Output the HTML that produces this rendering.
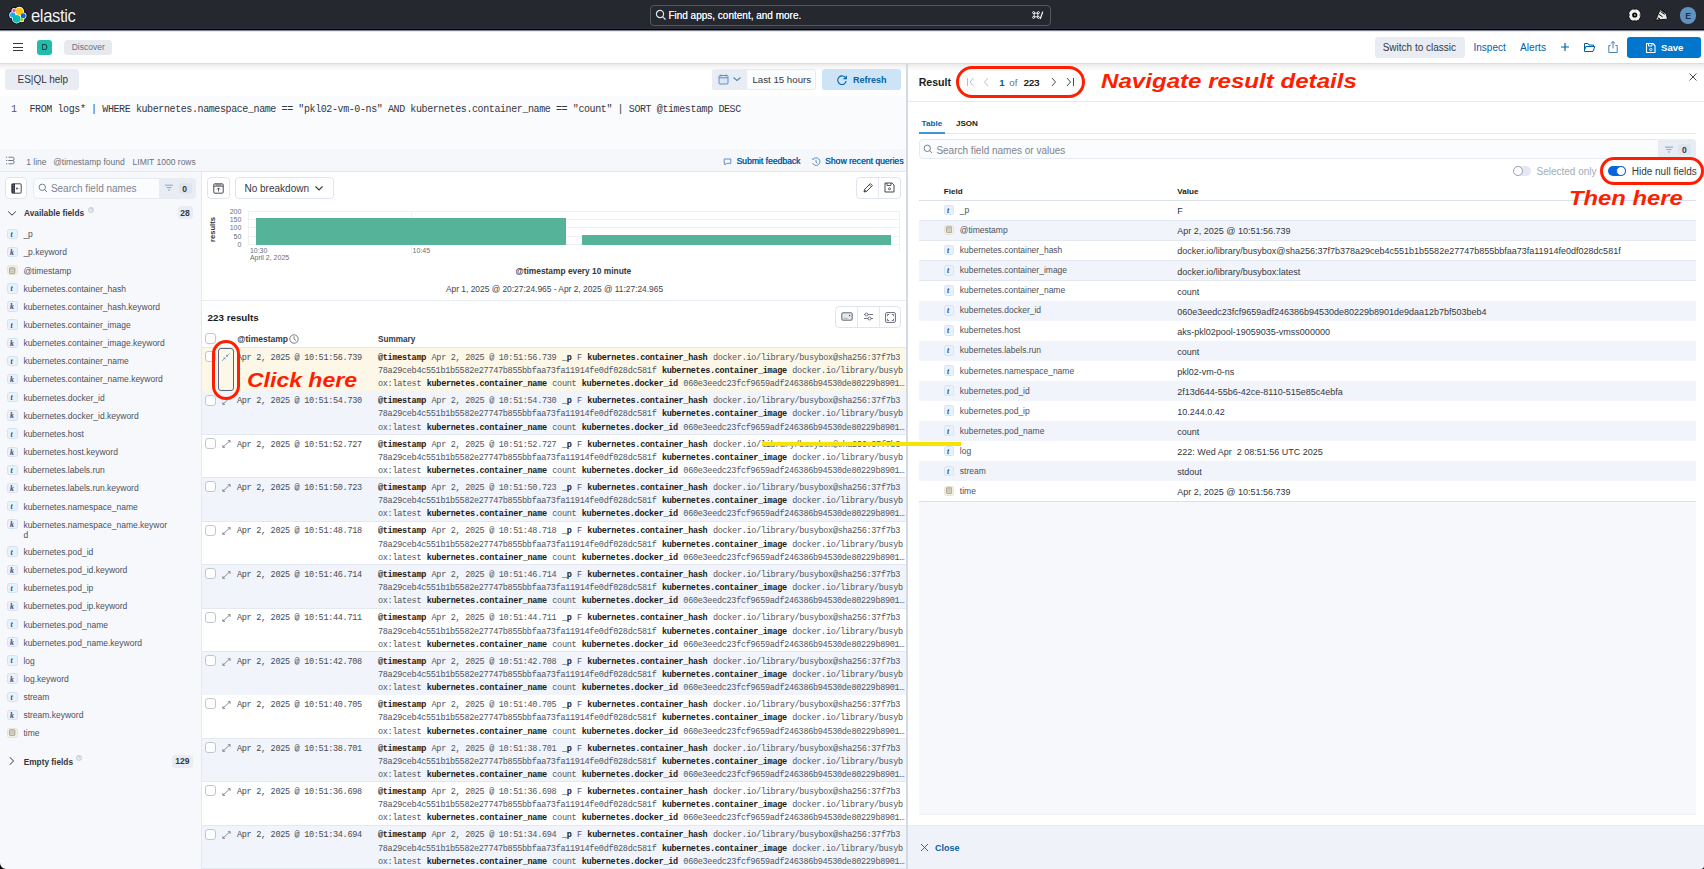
<!DOCTYPE html>
<html><head><meta charset="utf-8"><title>Discover - Elastic</title><style>
html,body{margin:0;padding:0;width:1704px;height:869px;overflow:hidden;background:#fff}
body{position:relative;font-family:"Liberation Sans",sans-serif;}
.t{position:absolute;white-space:pre;}
.r{position:absolute;}
b{font-weight:700}
i{font-style:normal;letter-spacing:0.4px}
</style></head><body>
<div class="r" style="left:0.00px;top:0.00px;width:1704.00px;height:29.00px;background:#25282f"></div>
<div class="r" style="left:0.00px;top:28.00px;width:1704.00px;height:1.00px;background:#2e3139"></div>
<div class="r" style="left:0.00px;top:29.00px;width:1704.00px;height:1.00px;background:#000"></div>
<svg class="r" style="left:7.00px;top:4.00px;" width="24" height="22" viewBox="0 0 24 22"><circle cx="12.4" cy="7.3" r="5.4" fill="#0a0a0a"/><circle cx="7" cy="6.5" r="3.3" fill="#0a0a0a"/><circle cx="5.7" cy="10.9" r="4.300000000000001" fill="#0a0a0a"/><circle cx="16.2" cy="11.8" r="4.1" fill="#0a0a0a"/><circle cx="9.6" cy="14.8" r="5.5" fill="#0a0a0a"/><circle cx="14.8" cy="15.8" r="3.3" fill="#0a0a0a"/><circle cx="12.4" cy="7.3" r="4.6" fill="#fff"/><circle cx="7" cy="6.5" r="2.5" fill="#fff"/><circle cx="5.7" cy="10.9" r="3.5" fill="#fff"/><circle cx="16.2" cy="11.8" r="3.3" fill="#fff"/><circle cx="9.6" cy="14.8" r="4.7" fill="#fff"/><circle cx="14.8" cy="15.8" r="2.5" fill="#fff"/><circle cx="12.4" cy="7.3" r="3.8" fill="#fec514"/><circle cx="7" cy="6.5" r="1.7" fill="#f04e98"/><circle cx="5.7" cy="10.9" r="2.7" fill="#1ba9f5"/><circle cx="16.2" cy="11.8" r="2.5" fill="#0b64dd"/><circle cx="9.6" cy="14.8" r="3.9" fill="#00bfb3"/><circle cx="14.8" cy="15.8" r="1.7" fill="#93c90e"/></svg>
<div class="t" style="left:30.60px;top:5.00px;font-size:17.5px;line-height:23px;color:#f4f5f7;letter-spacing:-0.4px;transform:scaleX(0.95);transform-origin:0 0;text-shadow:0 0 1px #000;">elastic</div>
<div class="r" style="left:650.30px;top:4.50px;width:400.40px;height:21.30px;border:1.5px solid #535862;border-radius:4px;background:#25282f;box-sizing:border-box"></div>
<svg class="r" style="left:655.00px;top:9.00px;" width="12" height="12" viewBox="0 0 12 12"><circle cx="5" cy="5" r="3.6" fill="none" stroke="#dfe5ef" stroke-width="1.2"/><path d="M7.6 7.6 L10.5 10.5" stroke="#dfe5ef" stroke-width="1.3"/></svg>
<div class="t" style="left:668.40px;top:9.00px;font-size:10.0px;line-height:13px;color:#eef1f6;text-shadow:0 0 0.3px #fff;">Find apps, content, and more.</div>
<svg class="r" style="left:1032.00px;top:10.50px;" width="12" height="9" viewBox="0 0 12 9"><g fill="none" stroke="#fff" stroke-width="0.9"><path d="M2.2 2.2h3.6v3.6H2.2z"/><circle cx="1.6" cy="1.6" r="1"/><circle cx="6.4" cy="1.6" r="1"/><circle cx="1.6" cy="6.4" r="1"/><circle cx="6.4" cy="6.4" r="1"/></g><path d="M8.2 8L10.8 0.6" stroke="#fff" stroke-width="1.2"/></svg>
<svg class="r" style="left:1627.00px;top:7.00px;" width="16" height="16" viewBox="0 0 16 16"><circle cx="7.7" cy="8" r="6.6" fill="#0a0a0a"/><circle cx="7.7" cy="8" r="5.9" fill="#f2f2f2"/><circle cx="7.7" cy="8" r="2.6" fill="#0a0a0a"/><circle cx="7.9" cy="8.1" r="0.8" fill="#ddd"/><path d="M6.5 2.6h2.4M6.5 13.4h2.4M2.3 6.8v2.4M13.1 6.8v2.4" stroke="#333" stroke-width="0.8"/></svg>
<svg class="r" style="left:1653.00px;top:7.00px;" width="16" height="16" viewBox="0 0 16 16"><path d="M2.6 13L7.2 2.6L13.2 6.8L14.6 12.2Z" fill="#e8e8e8" stroke="#0a0a0a" stroke-width="0.9" stroke-linejoin="round"/><path d="M4.6 10.6l2.2 1.4M6 7.4l3.6 2.4M7.6 4.6l4.2 2.8" stroke="#0a0a0a" stroke-width="1"/><circle cx="6.2" cy="11.6" r="0.7" fill="#0a0a0a"/><circle cx="10.8" cy="4.4" r="0.8" fill="#0a0a0a"/></svg>
<div class="r" style="left:1679.60px;top:7.00px;width:16.80px;height:16.80px;background:#6092c0;border-radius:50%"></div>
<div class="t" style="left:1685.20px;top:11.00px;font-size:8.5px;line-height:11px;color:#1d2a3e;text-shadow:0.3px 0 0 #1d2a3e;">E</div>
<div class="r" style="left:0.00px;top:30.00px;width:1704.00px;height:33.00px;background:#fff"></div>
<div class="r" style="left:0.00px;top:30.00px;width:1704.00px;height:1.00px;background:#7d828c"></div>
<div class="r" style="left:0.00px;top:31.00px;width:1704.00px;height:0.60px;background:#e6e8ee"></div>
<div class="r" style="left:0.00px;top:63.00px;width:1704.00px;height:1.00px;background:#d9dde4"></div>
<div class="r" style="left:0.00px;top:64.00px;width:1704.00px;height:6.00px;background:linear-gradient(#eae9e7,#f5f5f5 45%,#fcfcfc)"></div>
<div class="r" style="left:13.00px;top:42.70px;width:10.30px;height:1.20px;background:#343741"></div>
<div class="r" style="left:13.00px;top:46.50px;width:10.30px;height:1.20px;background:#343741"></div>
<div class="r" style="left:13.00px;top:50.00px;width:10.30px;height:1.20px;background:#343741"></div>
<div class="r" style="left:37.00px;top:39.50px;width:15.40px;height:15.50px;background:#20bcad;border-radius:3px"></div>
<div class="t" style="left:41.40px;top:42.00px;font-size:8.5px;line-height:11px;color:#1a1c21;">D</div>
<div class="r" style="left:63.70px;top:39.50px;width:48.80px;height:15.50px;background:#e6e9ee;border-radius:3.5px"></div>
<div class="t" style="left:71.70px;top:42.00px;font-size:8.5px;line-height:11px;color:#69707d;">Discover</div>
<div class="r" style="left:1374.90px;top:37.00px;width:90.10px;height:20.50px;background:#e9edf3;border-radius:3px"></div>
<div class="t" style="left:1382.70px;top:41.00px;font-size:10.0px;line-height:13px;color:#343741;">Switch to classic</div>
<div class="t" style="left:1473.50px;top:41.00px;font-size:10.0px;line-height:13px;color:#0061a6;">Inspect</div>
<div class="t" style="left:1520.00px;top:41.00px;font-size:10.2px;line-height:13px;color:#0061a6;">Alerts</div>
<svg class="r" style="left:1560.00px;top:42.00px;" width="10" height="10" viewBox="0 0 10 10"><path d="M5 1v8M1 5h8" stroke="#0061a6" stroke-width="1.2"/></svg>
<svg class="r" style="left:1583.00px;top:41.00px;" width="13" height="12" viewBox="0 0 13 12"><path d="M1.5 2.5h3.5l1 1.5h4.5v1.5M1.5 2.5v8h8.5l1.8-5h-9l-1.3 4" fill="none" stroke="#0061a6" stroke-width="1"/></svg>
<svg class="r" style="left:1607.00px;top:39.50px;" width="12" height="14" viewBox="0 0 12 14"><path d="M6 1.5v7M3.8 3.6L6 1.5l2.2 2.1M3.5 5.5H1.8v7h8.4v-7H8.5" fill="none" stroke="#4c7fba" stroke-width="1"/></svg>
<div class="r" style="left:1627.00px;top:37.00px;width:74.40px;height:20.50px;background:#0077cc;border-radius:3px"></div>
<svg class="r" style="left:1644.50px;top:41.50px;" width="11" height="12" viewBox="0 0 11 12"><path d="M1.5 1.5h6.5l2 2v7h-8.5z" fill="none" stroke="#fff" stroke-width="1.1"/><path d="M3.5 1.5v2.5h3.5v-2.5" fill="none" stroke="#fff" stroke-width="1"/><circle cx="5.8" cy="7.5" r="1.2" fill="none" stroke="#fff" stroke-width="0.9"/></svg>
<div class="t" style="left:1661.00px;top:42.00px;font-size:9.6px;line-height:12px;color:#fff;font-weight:700;">Save</div>
<div class="r" style="left:0.00px;top:70.00px;width:906.00px;height:25.50px;background:#fff"></div>
<div class="r" style="left:0.00px;top:64.00px;width:906.00px;height:6.00px;background:linear-gradient(#eae9e7,#f5f5f5 45%,#fcfcfc)"></div>
<div class="r" style="left:5.00px;top:69.00px;width:74.00px;height:20.70px;background:#e9edf3;border-radius:3px"></div>
<div class="t" style="left:17.50px;top:73.00px;font-size:10.0px;line-height:13px;color:#343741;">ES|QL help</div>
<div class="r" style="left:711.70px;top:69.20px;width:104.80px;height:20.50px;background:#fbfcfd;border:1px solid #e6ebf2;border-radius:3px;box-sizing:border-box"></div>
<div class="r" style="left:711.70px;top:69.20px;width:35.20px;height:20.50px;background:#e9edf3;border-radius:3px 0 0 3px"></div>
<svg class="r" style="left:717.50px;top:74.00px;" width="11" height="11" viewBox="0 0 11 11"><rect x="1" y="1.5" width="9" height="8.5" rx="1" fill="#dbe6f3" stroke="#4f86c6" stroke-width="0.9"/><path d="M1 3.8h9" stroke="#4f86c6" stroke-width="0.9"/><path d="M3 0.5v2M8 0.5v2" stroke="#4f86c6" stroke-width="0.8"/></svg>
<svg class="r" style="left:732.00px;top:76.00px;" width="10" height="6" viewBox="0 0 10 6"><path d="M1.5 1.5L5 4.5L8.5 1.5" fill="none" stroke="#4f86c6" stroke-width="1.1"/></svg>
<div class="t" style="left:752.40px;top:73.00px;font-size:9.7px;line-height:13px;color:#343741;">Last 15 hours</div>
<div class="r" style="left:822.40px;top:69.20px;width:78.60px;height:20.50px;background:#cce4f5;border-radius:3px"></div>
<svg class="r" style="left:836.00px;top:73.50px;" width="12" height="12" viewBox="0 0 12 12"><path d="M9.8 4.2A4.3 4.3 0 1 0 10.2 7.2" fill="none" stroke="#0061a6" stroke-width="1.1"/><path d="M10.3 1.8v2.8H7.5" fill="none" stroke="#0061a6" stroke-width="1.1"/></svg>
<div class="t" style="left:852.90px;top:74.00px;font-size:9.0px;line-height:12px;color:#0061a6;font-weight:700;">Refresh</div>
<div class="r" style="left:0.00px;top:95.50px;width:906.00px;height:53.50px;background:#fafbfd"></div>
<div class="t" style="left:11.00px;top:103.00px;font-size:10.0px;line-height:13px;color:#535966;font-family:'Liberation Mono',monospace;letter-spacing:-0.4px;">1</div>
<div class="t" style="left:29.50px;top:103.00px;font-size:10.0px;line-height:13px;color:#343741;font-family:'Liberation Mono',monospace;letter-spacing:-0.4px;">FROM logs* | WHERE kubernetes.namespace_name == &quot;pkl02-vm-0-ns&quot; AND kubernetes.container_name == &quot;count&quot; | SORT @timestamp DESC</div>
<div class="r" style="left:0.00px;top:149.00px;width:906.00px;height:22.00px;background:#f5f7fa"></div>
<div class="r" style="left:0.00px;top:171.00px;width:906.00px;height:1.00px;background:#e3e8f2"></div>
<svg class="r" style="left:5.00px;top:156.00px;" width="10" height="9" viewBox="0 0 10 9"><path d="M1 1.2h1.2M1 4.5h1.2M1 7.8h1.2M3.5 1.2h4a1.5 1.5 0 0 1 0 3.3h-4M3.5 4.5h4a1.6 1.6 0 0 1 0 3.3h-4" fill="none" stroke="#69707d" stroke-width="0.9"/></svg>
<div class="t" style="left:26.20px;top:157.00px;font-size:8.5px;line-height:11px;color:#69707d;">1 line</div>
<div class="t" style="left:53.20px;top:157.00px;font-size:8.5px;line-height:11px;color:#69707d;">@timestamp found</div>
<div class="t" style="left:132.60px;top:157.00px;font-size:8.5px;line-height:11px;color:#69707d;">LIMIT 1000 rows</div>
<svg class="r" style="left:722.50px;top:158.00px;" width="9" height="8" viewBox="0 0 9 8"><path d="M1.2 1h6.6v4.3H3.5L1.8 7V5.3h-.6z" fill="none" stroke="#4f86c6" stroke-width="0.9"/></svg>
<div class="t" style="left:736.40px;top:156.00px;font-size:8.6px;line-height:11px;color:#0061a6;text-shadow:0.25px 0 0 #0061a6;">Submit feedback</div>
<svg class="r" style="left:811.00px;top:156.50px;" width="10" height="10" viewBox="0 0 10 10"><path d="M2 2.5A3.8 3.8 0 1 1 1.6 6" fill="none" stroke="#4f86c6" stroke-width="0.9"/><path d="M5 2.8v2.4l1.5 1" fill="none" stroke="#4f86c6" stroke-width="0.9"/><path d="M.8 1.5l1.2 1.1 1.2-1" fill="none" stroke="#4f86c6" stroke-width="0.8"/></svg>
<div class="t" style="left:825.10px;top:156.00px;font-size:8.6px;line-height:11px;color:#0061a6;text-shadow:0.25px 0 0 #0061a6;">Show recent queries</div>
<div class="r" style="left:0.00px;top:172.00px;width:201.00px;height:697.00px;background:#f7f8fc"></div>
<div class="r" style="left:201.00px;top:172.00px;width:1.20px;height:697.00px;background:#e3e8f2"></div>
<div class="r" style="left:4.80px;top:177.40px;width:22.40px;height:21.20px;background:#fff;border:1px solid #dfe5ef;border-radius:4px;box-sizing:border-box"></div>
<svg class="r" style="left:10.50px;top:182.50px;" width="11" height="11" viewBox="0 0 11 11"><rect x="0.8" y="0.8" width="9.4" height="9.4" rx="1" fill="#fff" stroke="#343741" stroke-width="0.9"/><rect x="0.8" y="0.8" width="3.2" height="9.4" fill="#343741"/><path d="M2.4 2v1M2.4 4.3v1M2.4 6.6v1M2.4 8.6v.8" stroke="#aaa" stroke-width="0.7"/><circle cx="6" cy="5.5" r="0.9" fill="#343741"/><path d="M6.5 5.5h1.8" stroke="#bbb" stroke-width="0.8"/></svg>
<div class="r" style="left:32.60px;top:177.60px;width:163.20px;height:21.00px;background:#fbfcfd;border:1px solid #e6ebf2;border-radius:4px;box-sizing:border-box"></div>
<div class="r" style="left:158.70px;top:177.60px;width:37.10px;height:21.00px;background:#e9edf3;border-radius:0 4px 4px 0"></div>
<svg class="r" style="left:38.00px;top:183.00px;" width="10" height="10" viewBox="0 0 10 10"><circle cx="4.3" cy="4.3" r="3.2" fill="none" stroke="#69707d" stroke-width="0.9"/><path d="M6.6 6.6L9 9" stroke="#69707d" stroke-width="0.9"/></svg>
<div class="t" style="left:50.90px;top:182.00px;font-size:10.0px;line-height:13px;color:#7d8491;">Search field names</div>
<svg class="r" style="left:164.00px;top:184.00px;" width="10" height="8" viewBox="0 0 10 8"><path d="M1 1.2h8M2.5 3.6h5M4 6h2" stroke="#6a9ed6" stroke-width="0.9"/></svg>
<div class="r" style="left:178.50px;top:182.50px;width:13.00px;height:11.50px;background:#dfe5ef;border-radius:3px"></div>
<div class="t" style="left:182.30px;top:184.00px;font-size:8.5px;line-height:11px;color:#343741;font-weight:700;">0</div>
<svg class="r" style="left:7.00px;top:210.00px;" width="10" height="7" viewBox="0 0 10 7"><path d="M1.2 1.5L5 5.2L8.8 1.5" fill="none" stroke="#343741" stroke-width="1"/></svg>
<div class="t" style="left:24.00px;top:208.00px;font-size:8.3px;line-height:11px;color:#343741;font-weight:700;">Available fields</div>
<svg class="r" style="left:87.50px;top:207.00px;" width="6" height="6" viewBox="0 0 6 6"><circle cx="3" cy="3" r="2.4" fill="none" stroke="#98a2b3" stroke-width="0.6"/><path d="M2.2 2.3a0.8 0.8 0 1 1 0.8 1v0.6" fill="none" stroke="#98a2b3" stroke-width="0.5"/></svg>
<div class="r" style="left:177.60px;top:206.30px;width:15.60px;height:12.70px;background:#e9edf3;border-radius:3px"></div>
<div class="t" style="left:180.30px;top:208.00px;font-size:8.5px;line-height:11px;color:#343741;font-weight:700;">28</div>
<div class="r" style="left:7.20px;top:228.70px;width:10.40px;height:10.40px;background:#e9f1fa;border:0.8px solid #d3e3f4;border-radius:2.5px;box-sizing:border-box"></div>
<div class="t" style="left:10.50px;top:230.00px;font-size:7.6px;line-height:10px;color:#1e4d8c;font-weight:700;font-style:italic;font-family:'Liberation Serif',serif;">t</div>
<div class="t" style="left:23.40px;top:229.00px;font-size:8.5px;line-height:11px;color:#4b505b;">_p</div>
<div class="r" style="left:7.20px;top:246.85px;width:10.40px;height:10.40px;background:#e9f1fa;border:0.8px solid #d3e3f4;border-radius:2.5px;box-sizing:border-box"></div>
<div class="t" style="left:10.10px;top:248.00px;font-size:7.6px;line-height:10px;color:#1e4d8c;font-weight:700;font-style:italic;font-family:'Liberation Serif',serif;">k</div>
<div class="t" style="left:23.40px;top:247.00px;font-size:8.5px;line-height:11px;color:#4b505b;">_p.keyword</div>
<div class="r" style="left:7.20px;top:265.00px;width:10.40px;height:10.40px;background:#f6f1e6;border:0.8px solid #ebe3d2;border-radius:2.5px;box-sizing:border-box"></div>
<svg class="r" style="left:9.20px;top:266.60px;" width="6.4" height="7" viewBox="0 0 6.4 7"><rect x="0.5" y="0.8" width="5.4" height="5.6" rx="0.6" fill="#ddd6ca" stroke="#9b958b" stroke-width="0.8"/><path d="M0.5 2.4h5.4M0.5 4.2h5.4" stroke="#b3ada3" stroke-width="0.5"/></svg>
<div class="t" style="left:23.40px;top:266.00px;font-size:8.5px;line-height:11px;color:#4b505b;">@timestamp</div>
<div class="r" style="left:7.20px;top:283.15px;width:10.40px;height:10.40px;background:#e9f1fa;border:0.8px solid #d3e3f4;border-radius:2.5px;box-sizing:border-box"></div>
<div class="t" style="left:10.50px;top:284.00px;font-size:7.6px;line-height:10px;color:#1e4d8c;font-weight:700;font-style:italic;font-family:'Liberation Serif',serif;">t</div>
<div class="t" style="left:23.40px;top:284.00px;font-size:8.5px;line-height:11px;color:#4b505b;">kubernetes.container_hash</div>
<div class="r" style="left:7.20px;top:301.30px;width:10.40px;height:10.40px;background:#e9f1fa;border:0.8px solid #d3e3f4;border-radius:2.5px;box-sizing:border-box"></div>
<div class="t" style="left:10.10px;top:302.00px;font-size:7.6px;line-height:10px;color:#1e4d8c;font-weight:700;font-style:italic;font-family:'Liberation Serif',serif;">k</div>
<div class="t" style="left:23.40px;top:302.00px;font-size:8.5px;line-height:11px;color:#4b505b;">kubernetes.container_hash.keyword</div>
<div class="r" style="left:7.20px;top:319.45px;width:10.40px;height:10.40px;background:#e9f1fa;border:0.8px solid #d3e3f4;border-radius:2.5px;box-sizing:border-box"></div>
<div class="t" style="left:10.50px;top:321.00px;font-size:7.6px;line-height:10px;color:#1e4d8c;font-weight:700;font-style:italic;font-family:'Liberation Serif',serif;">t</div>
<div class="t" style="left:23.40px;top:320.00px;font-size:8.5px;line-height:11px;color:#4b505b;">kubernetes.container_image</div>
<div class="r" style="left:7.20px;top:337.60px;width:10.40px;height:10.40px;background:#e9f1fa;border:0.8px solid #d3e3f4;border-radius:2.5px;box-sizing:border-box"></div>
<div class="t" style="left:10.10px;top:339.00px;font-size:7.6px;line-height:10px;color:#1e4d8c;font-weight:700;font-style:italic;font-family:'Liberation Serif',serif;">k</div>
<div class="t" style="left:23.40px;top:338.00px;font-size:8.5px;line-height:11px;color:#4b505b;">kubernetes.container_image.keyword</div>
<div class="r" style="left:7.20px;top:355.75px;width:10.40px;height:10.40px;background:#e9f1fa;border:0.8px solid #d3e3f4;border-radius:2.5px;box-sizing:border-box"></div>
<div class="t" style="left:10.50px;top:357.00px;font-size:7.6px;line-height:10px;color:#1e4d8c;font-weight:700;font-style:italic;font-family:'Liberation Serif',serif;">t</div>
<div class="t" style="left:23.40px;top:356.00px;font-size:8.5px;line-height:11px;color:#4b505b;">kubernetes.container_name</div>
<div class="r" style="left:7.20px;top:373.90px;width:10.40px;height:10.40px;background:#e9f1fa;border:0.8px solid #d3e3f4;border-radius:2.5px;box-sizing:border-box"></div>
<div class="t" style="left:10.10px;top:375.00px;font-size:7.6px;line-height:10px;color:#1e4d8c;font-weight:700;font-style:italic;font-family:'Liberation Serif',serif;">k</div>
<div class="t" style="left:23.40px;top:374.00px;font-size:8.5px;line-height:11px;color:#4b505b;">kubernetes.container_name.keyword</div>
<div class="r" style="left:7.20px;top:392.05px;width:10.40px;height:10.40px;background:#e9f1fa;border:0.8px solid #d3e3f4;border-radius:2.5px;box-sizing:border-box"></div>
<div class="t" style="left:10.50px;top:393.00px;font-size:7.6px;line-height:10px;color:#1e4d8c;font-weight:700;font-style:italic;font-family:'Liberation Serif',serif;">t</div>
<div class="t" style="left:23.40px;top:393.00px;font-size:8.5px;line-height:11px;color:#4b505b;">kubernetes.docker_id</div>
<div class="r" style="left:7.20px;top:410.20px;width:10.40px;height:10.40px;background:#e9f1fa;border:0.8px solid #d3e3f4;border-radius:2.5px;box-sizing:border-box"></div>
<div class="t" style="left:10.10px;top:411.00px;font-size:7.6px;line-height:10px;color:#1e4d8c;font-weight:700;font-style:italic;font-family:'Liberation Serif',serif;">k</div>
<div class="t" style="left:23.40px;top:411.00px;font-size:8.5px;line-height:11px;color:#4b505b;">kubernetes.docker_id.keyword</div>
<div class="r" style="left:7.20px;top:428.35px;width:10.40px;height:10.40px;background:#e9f1fa;border:0.8px solid #d3e3f4;border-radius:2.5px;box-sizing:border-box"></div>
<div class="t" style="left:10.50px;top:430.00px;font-size:7.6px;line-height:10px;color:#1e4d8c;font-weight:700;font-style:italic;font-family:'Liberation Serif',serif;">t</div>
<div class="t" style="left:23.40px;top:429.00px;font-size:8.5px;line-height:11px;color:#4b505b;">kubernetes.host</div>
<div class="r" style="left:7.20px;top:446.50px;width:10.40px;height:10.40px;background:#e9f1fa;border:0.8px solid #d3e3f4;border-radius:2.5px;box-sizing:border-box"></div>
<div class="t" style="left:10.10px;top:448.00px;font-size:7.6px;line-height:10px;color:#1e4d8c;font-weight:700;font-style:italic;font-family:'Liberation Serif',serif;">k</div>
<div class="t" style="left:23.40px;top:447.00px;font-size:8.5px;line-height:11px;color:#4b505b;">kubernetes.host.keyword</div>
<div class="r" style="left:7.20px;top:464.65px;width:10.40px;height:10.40px;background:#e9f1fa;border:0.8px solid #d3e3f4;border-radius:2.5px;box-sizing:border-box"></div>
<div class="t" style="left:10.50px;top:466.00px;font-size:7.6px;line-height:10px;color:#1e4d8c;font-weight:700;font-style:italic;font-family:'Liberation Serif',serif;">t</div>
<div class="t" style="left:23.40px;top:465.00px;font-size:8.5px;line-height:11px;color:#4b505b;">kubernetes.labels.run</div>
<div class="r" style="left:7.20px;top:482.80px;width:10.40px;height:10.40px;background:#e9f1fa;border:0.8px solid #d3e3f4;border-radius:2.5px;box-sizing:border-box"></div>
<div class="t" style="left:10.10px;top:484.00px;font-size:7.6px;line-height:10px;color:#1e4d8c;font-weight:700;font-style:italic;font-family:'Liberation Serif',serif;">k</div>
<div class="t" style="left:23.40px;top:483.00px;font-size:8.5px;line-height:11px;color:#4b505b;">kubernetes.labels.run.keyword</div>
<div class="r" style="left:7.20px;top:500.95px;width:10.40px;height:10.40px;background:#e9f1fa;border:0.8px solid #d3e3f4;border-radius:2.5px;box-sizing:border-box"></div>
<div class="t" style="left:10.50px;top:502.00px;font-size:7.6px;line-height:10px;color:#1e4d8c;font-weight:700;font-style:italic;font-family:'Liberation Serif',serif;">t</div>
<div class="t" style="left:23.40px;top:502.00px;font-size:8.5px;line-height:11px;color:#4b505b;">kubernetes.namespace_name</div>
<div class="r" style="left:7.20px;top:519.10px;width:10.40px;height:10.40px;background:#e9f1fa;border:0.8px solid #d3e3f4;border-radius:2.5px;box-sizing:border-box"></div>
<div class="t" style="left:10.10px;top:520.00px;font-size:7.6px;line-height:10px;color:#1e4d8c;font-weight:700;font-style:italic;font-family:'Liberation Serif',serif;">k</div>
<div class="t" style="left:23.40px;top:520.00px;font-size:8.5px;line-height:11px;color:#4b505b;">kubernetes.namespace_name.keywor</div>
<div class="t" style="left:23.40px;top:530.00px;font-size:8.5px;line-height:11px;color:#4b505b;">d</div>
<div class="r" style="left:7.20px;top:546.35px;width:10.40px;height:10.40px;background:#e9f1fa;border:0.8px solid #d3e3f4;border-radius:2.5px;box-sizing:border-box"></div>
<div class="t" style="left:10.50px;top:548.00px;font-size:7.6px;line-height:10px;color:#1e4d8c;font-weight:700;font-style:italic;font-family:'Liberation Serif',serif;">t</div>
<div class="t" style="left:23.40px;top:547.00px;font-size:8.5px;line-height:11px;color:#4b505b;">kubernetes.pod_id</div>
<div class="r" style="left:7.20px;top:564.50px;width:10.40px;height:10.40px;background:#e9f1fa;border:0.8px solid #d3e3f4;border-radius:2.5px;box-sizing:border-box"></div>
<div class="t" style="left:10.10px;top:566.00px;font-size:7.6px;line-height:10px;color:#1e4d8c;font-weight:700;font-style:italic;font-family:'Liberation Serif',serif;">k</div>
<div class="t" style="left:23.40px;top:565.00px;font-size:8.5px;line-height:11px;color:#4b505b;">kubernetes.pod_id.keyword</div>
<div class="r" style="left:7.20px;top:582.65px;width:10.40px;height:10.40px;background:#e9f1fa;border:0.8px solid #d3e3f4;border-radius:2.5px;box-sizing:border-box"></div>
<div class="t" style="left:10.50px;top:584.00px;font-size:7.6px;line-height:10px;color:#1e4d8c;font-weight:700;font-style:italic;font-family:'Liberation Serif',serif;">t</div>
<div class="t" style="left:23.40px;top:583.00px;font-size:8.5px;line-height:11px;color:#4b505b;">kubernetes.pod_ip</div>
<div class="r" style="left:7.20px;top:600.80px;width:10.40px;height:10.40px;background:#e9f1fa;border:0.8px solid #d3e3f4;border-radius:2.5px;box-sizing:border-box"></div>
<div class="t" style="left:10.10px;top:602.00px;font-size:7.6px;line-height:10px;color:#1e4d8c;font-weight:700;font-style:italic;font-family:'Liberation Serif',serif;">k</div>
<div class="t" style="left:23.40px;top:601.00px;font-size:8.5px;line-height:11px;color:#4b505b;">kubernetes.pod_ip.keyword</div>
<div class="r" style="left:7.20px;top:618.95px;width:10.40px;height:10.40px;background:#e9f1fa;border:0.8px solid #d3e3f4;border-radius:2.5px;box-sizing:border-box"></div>
<div class="t" style="left:10.50px;top:620.00px;font-size:7.6px;line-height:10px;color:#1e4d8c;font-weight:700;font-style:italic;font-family:'Liberation Serif',serif;">t</div>
<div class="t" style="left:23.40px;top:620.00px;font-size:8.5px;line-height:11px;color:#4b505b;">kubernetes.pod_name</div>
<div class="r" style="left:7.20px;top:637.10px;width:10.40px;height:10.40px;background:#e9f1fa;border:0.8px solid #d3e3f4;border-radius:2.5px;box-sizing:border-box"></div>
<div class="t" style="left:10.10px;top:638.00px;font-size:7.6px;line-height:10px;color:#1e4d8c;font-weight:700;font-style:italic;font-family:'Liberation Serif',serif;">k</div>
<div class="t" style="left:23.40px;top:638.00px;font-size:8.5px;line-height:11px;color:#4b505b;">kubernetes.pod_name.keyword</div>
<div class="r" style="left:7.20px;top:655.25px;width:10.40px;height:10.40px;background:#e9f1fa;border:0.8px solid #d3e3f4;border-radius:2.5px;box-sizing:border-box"></div>
<div class="t" style="left:10.50px;top:656.00px;font-size:7.6px;line-height:10px;color:#1e4d8c;font-weight:700;font-style:italic;font-family:'Liberation Serif',serif;">t</div>
<div class="t" style="left:23.40px;top:656.00px;font-size:8.5px;line-height:11px;color:#4b505b;">log</div>
<div class="r" style="left:7.20px;top:673.40px;width:10.40px;height:10.40px;background:#e9f1fa;border:0.8px solid #d3e3f4;border-radius:2.5px;box-sizing:border-box"></div>
<div class="t" style="left:10.10px;top:675.00px;font-size:7.6px;line-height:10px;color:#1e4d8c;font-weight:700;font-style:italic;font-family:'Liberation Serif',serif;">k</div>
<div class="t" style="left:23.40px;top:674.00px;font-size:8.5px;line-height:11px;color:#4b505b;">log.keyword</div>
<div class="r" style="left:7.20px;top:691.55px;width:10.40px;height:10.40px;background:#e9f1fa;border:0.8px solid #d3e3f4;border-radius:2.5px;box-sizing:border-box"></div>
<div class="t" style="left:10.50px;top:693.00px;font-size:7.6px;line-height:10px;color:#1e4d8c;font-weight:700;font-style:italic;font-family:'Liberation Serif',serif;">t</div>
<div class="t" style="left:23.40px;top:692.00px;font-size:8.5px;line-height:11px;color:#4b505b;">stream</div>
<div class="r" style="left:7.20px;top:709.70px;width:10.40px;height:10.40px;background:#e9f1fa;border:0.8px solid #d3e3f4;border-radius:2.5px;box-sizing:border-box"></div>
<div class="t" style="left:10.10px;top:711.00px;font-size:7.6px;line-height:10px;color:#1e4d8c;font-weight:700;font-style:italic;font-family:'Liberation Serif',serif;">k</div>
<div class="t" style="left:23.40px;top:710.00px;font-size:8.5px;line-height:11px;color:#4b505b;">stream.keyword</div>
<div class="r" style="left:7.20px;top:727.85px;width:10.40px;height:10.40px;background:#f6f1e6;border:0.8px solid #ebe3d2;border-radius:2.5px;box-sizing:border-box"></div>
<svg class="r" style="left:9.20px;top:729.45px;" width="6.4" height="7" viewBox="0 0 6.4 7"><rect x="0.5" y="0.8" width="5.4" height="5.6" rx="0.6" fill="#ddd6ca" stroke="#9b958b" stroke-width="0.8"/><path d="M0.5 2.4h5.4M0.5 4.2h5.4" stroke="#b3ada3" stroke-width="0.5"/></svg>
<div class="t" style="left:23.40px;top:728.00px;font-size:8.5px;line-height:11px;color:#4b505b;">time</div>
<svg class="r" style="left:8.00px;top:756.00px;" width="7" height="10" viewBox="0 0 7 10"><path d="M1.8 1.2L5.5 5L1.8 8.8" fill="none" stroke="#343741" stroke-width="1"/></svg>
<div class="t" style="left:23.70px;top:757.00px;font-size:8.3px;line-height:11px;color:#343741;font-weight:700;">Empty fields</div>
<svg class="r" style="left:75.50px;top:755.00px;" width="6" height="6" viewBox="0 0 6 6"><circle cx="3" cy="3" r="2.4" fill="none" stroke="#98a2b3" stroke-width="0.6"/><path d="M2.2 2.3a0.8 0.8 0 1 1 0.8 1v0.6" fill="none" stroke="#98a2b3" stroke-width="0.5"/></svg>
<div class="r" style="left:172.00px;top:754.50px;width:21.20px;height:13.20px;background:#e9edf3;border-radius:3px"></div>
<div class="t" style="left:175.20px;top:756.00px;font-size:8.5px;line-height:11px;color:#343741;font-weight:700;">129</div>
<div class="r" style="left:202.20px;top:172.00px;width:703.80px;height:697.00px;background:#fff"></div>
<div class="r" style="left:207.00px;top:177.20px;width:22.80px;height:21.60px;background:#fff;border:1px solid #dfe5ef;border-radius:4px;box-sizing:border-box"></div>
<svg class="r" style="left:213.00px;top:182.50px;" width="11" height="11" viewBox="0 0 11 11"><rect x="0.8" y="0.8" width="9.4" height="9.4" rx="1" fill="none" stroke="#343741" stroke-width="0.9"/><path d="M0.8 3.2h9.4M2.5 2h6" stroke="#343741" stroke-width="0.8"/><path d="M5.5 8.5V5M4 6.4l1.5-1.5L7 6.4" fill="none" stroke="#343741" stroke-width="0.8"/></svg>
<div class="r" style="left:234.90px;top:177.20px;width:99.00px;height:21.60px;background:#fff;border:1px solid #dfe5ef;border-radius:4px;box-sizing:border-box"></div>
<div class="t" style="left:244.50px;top:182.00px;font-size:10.0px;line-height:13px;color:#343741;">No breakdown</div>
<svg class="r" style="left:314.00px;top:185.00px;" width="10" height="7" viewBox="0 0 10 7"><path d="M1.5 1.5L5 5L8.5 1.5" fill="none" stroke="#343741" stroke-width="1.1"/></svg>
<div class="r" style="left:855.80px;top:177.20px;width:45.20px;height:21.60px;background:#fff;border:1px solid #dfe5ef;border-radius:4px;box-sizing:border-box"></div>
<div class="r" style="left:877.80px;top:177.70px;width:1.00px;height:20.90px;background:#e3e8f2"></div>
<svg class="r" style="left:861.50px;top:182.00px;" width="12" height="12" viewBox="0 0 12 12"><path d="M2 10l0.6-2.6L8.4 1.6l2 2L4.6 9.4z" fill="none" stroke="#343741" stroke-width="0.9"/><path d="M7.3 2.7l2 2M2.6 7.4l2 2" stroke="#343741" stroke-width="0.8"/><path d="M2 10l0.5-1.6 1.1 1.1z" fill="#343741"/></svg>
<svg class="r" style="left:884.00px;top:182.00px;" width="11" height="11" viewBox="0 0 11 11"><path d="M1 1h7l2 2v7H1z" fill="none" stroke="#343741" stroke-width="0.9"/><path d="M3 1v2.5h4V1" fill="none" stroke="#343741" stroke-width="0.8"/><circle cx="5.5" cy="6.8" r="1" fill="none" stroke="#343741" stroke-width="0.8"/></svg>
<div class="r" style="left:247.80px;top:211.00px;width:651.60px;height:1.00px;background:#eef1f6"></div>
<div class="t" style="left:241.40px;top:207.00px;font-size:7.0px;line-height:9px;color:#69707d;transform:translateX(-100%);">200</div>
<div class="r" style="left:247.80px;top:219.20px;width:651.60px;height:1.00px;background:#eef1f6"></div>
<div class="t" style="left:241.40px;top:215.00px;font-size:7.0px;line-height:9px;color:#69707d;transform:translateX(-100%);">150</div>
<div class="r" style="left:247.80px;top:227.40px;width:651.60px;height:1.00px;background:#eef1f6"></div>
<div class="t" style="left:241.40px;top:223.00px;font-size:7.0px;line-height:9px;color:#69707d;transform:translateX(-100%);">100</div>
<div class="r" style="left:247.80px;top:235.80px;width:651.60px;height:1.00px;background:#eef1f6"></div>
<div class="t" style="left:241.40px;top:232.00px;font-size:7.0px;line-height:9px;color:#69707d;transform:translateX(-100%);">50</div>
<div class="r" style="left:247.80px;top:244.30px;width:651.60px;height:1.00px;background:#eef1f6"></div>
<div class="t" style="left:241.40px;top:240.00px;font-size:7.0px;line-height:9px;color:#69707d;transform:translateX(-100%);">0</div>
<div class="r" style="left:247.80px;top:211.00px;width:1.00px;height:34.00px;background:#eef1f6"></div>
<div class="r" style="left:898.80px;top:211.00px;width:1.00px;height:41.00px;background:#eef1f6"></div>
<div class="r" style="left:411.00px;top:211.00px;width:1.00px;height:44.00px;background:#eef1f6"></div>
<div class="r" style="left:256.20px;top:217.90px;width:309.40px;height:26.90px;background:#54b399"></div>
<div class="r" style="left:581.90px;top:234.70px;width:309.50px;height:10.10px;background:#54b399"></div>
<div class="t" style="left:207.00px;top:224.00px;font-size:7.6px;line-height:10px;color:#343741;font-weight:700;transform:rotate(-90deg);transform-origin:0 0;left:207.5px;top:241.5px;">results</div>
<div class="t" style="left:249.90px;top:246.00px;font-size:7.0px;line-height:9px;color:#69707d;">10:30</div>
<div class="t" style="left:249.90px;top:253.00px;font-size:7.0px;line-height:9px;color:#69707d;">April 2, 2025</div>
<div class="t" style="left:412.60px;top:246.00px;font-size:7.0px;line-height:9px;color:#69707d;">10:45</div>
<div class="t" style="left:515.50px;top:266.00px;font-size:8.4px;line-height:11px;color:#343741;font-weight:700;">@timestamp every 10 minute</div>
<div class="t" style="left:446.00px;top:284.00px;font-size:8.4px;line-height:11px;color:#40454f;">Apr 1, 2025 @ 20:27:24.965 - Apr 2, 2025 @ 11:27:24.965</div>
<div class="r" style="left:202.20px;top:300.20px;width:703.80px;height:1.30px;background:#e9edf3"></div>
<div class="t" style="left:207.60px;top:311.00px;font-size:9.8px;line-height:13px;color:#1a1c21;font-weight:700;">223 results</div>
<div class="r" style="left:835.30px;top:306.30px;width:65.80px;height:21.70px;background:#fff;border:1px solid #dfe5ef;border-radius:4px;box-sizing:border-box"></div>
<div class="r" style="left:857.00px;top:306.70px;width:1.00px;height:20.90px;background:#e3e8f2"></div>
<div class="r" style="left:879.20px;top:306.70px;width:1.00px;height:20.90px;background:#e3e8f2"></div>
<svg class="r" style="left:840.50px;top:312.00px;" width="12" height="9" viewBox="0 0 12 9"><rect x="0.8" y="0.8" width="10.4" height="7.4" rx="1" fill="#e6e8ec" stroke="#535966" stroke-width="0.9"/><circle cx="8.7" cy="3.6" r="0.7" fill="#1a1c21"/><path d="M2.5 6.3h4" stroke="#9aa0aa" stroke-width="0.8"/></svg>
<svg class="r" style="left:863.00px;top:312.00px;" width="11" height="10" viewBox="0 0 11 10"><path d="M1 2.5h9M1 6.5h9" stroke="#535966" stroke-width="0.8"/><circle cx="3.5" cy="2.5" r="1.5" fill="#fff" stroke="#535966" stroke-width="0.8"/><circle cx="6.5" cy="6.5" r="1.5" fill="#fff" stroke="#535966" stroke-width="0.8"/></svg>
<svg class="r" style="left:884.50px;top:311.50px;" width="11" height="11" viewBox="0 0 11 11"><rect x="0.6" y="0.6" width="9.8" height="9.8" rx="1.2" fill="none" stroke="#535966" stroke-width="0.9"/><path d="M2.5 4.2V2.5h1.7M6.8 2.5h1.7v1.7M8.5 6.8v1.7H6.8M4.2 8.5H2.5V6.8" fill="none" stroke="#535966" stroke-width="0.8"/></svg>
<div class="r" style="left:204.50px;top:333.30px;width:11.40px;height:11.00px;background:#fff;border:1.2px solid #c3c6cc;border-radius:3px;box-sizing:border-box"></div>
<div class="t" style="left:237.20px;top:334.00px;font-size:8.5px;line-height:11px;color:#343741;font-weight:700;">@timestamp</div>
<svg class="r" style="left:289.00px;top:334.00px;" width="10" height="10" viewBox="0 0 10 10"><circle cx="5" cy="5" r="4.2" fill="none" stroke="#69707d" stroke-width="0.9"/><path d="M5 2.2v2.8l2 1.6" fill="none" stroke="#69707d" stroke-width="0.9"/></svg>
<div class="t" style="left:378.00px;top:334.00px;font-size:8.2px;line-height:11px;color:#343741;font-weight:700;">Summary</div>
<div class="r" style="left:202.20px;top:346.60px;width:703.80px;height:0.80px;background:#e3e8f2"></div>
<div class="r" style="left:202.20px;top:348.00px;width:703.80px;height:43.42px;background:#fdf7e7"></div>
<div class="r" style="left:202.20px;top:390.62px;width:703.80px;height:0.80px;background:#e3e8f2"></div>
<div class="r" style="left:204.50px;top:351.10px;width:11.40px;height:11.00px;background:#fff;border:1.2px solid #c3c6cc;border-radius:3px;box-sizing:border-box"></div>
<div class="t" style="left:237.00px;top:353.00px;font-size:8.5px;line-height:11px;color:#464b55;font-family:'Liberation Mono',monospace;letter-spacing:-0.3px;">Apr 2, 2025 @ 10:51:56.739</div>
<div class="t" style="left:378.00px;top:353.00px;font-size:8.5px;line-height:11px;color:#4f545e;font-family:'Liberation Mono',monospace;letter-spacing:-0.3px;"><b style="color:#1a1c21">@timestamp</b><i> </i>Apr 2, 2025 @ 10:51:56.739<i> </i><b style="color:#1a1c21">_p</b><i> </i>F<i> </i><b style="color:#1a1c21">kubernetes.container_hash</b><i> </i>docker.io/library/busybox@sha256:37f7b3</div>
<div class="t" style="left:378.00px;top:366.00px;font-size:8.5px;line-height:11px;color:#4f545e;font-family:'Liberation Mono',monospace;letter-spacing:-0.3px;">78a29ceb4c551b1b5582e27747b855bbfaa73fa11914fe0df028dc581f<i> </i><b style="color:#1a1c21">kubernetes.container_image</b><i> </i>docker.io/library/busyb</div>
<div class="t" style="left:378.00px;top:379.00px;font-size:8.5px;line-height:11px;color:#4f545e;font-family:'Liberation Mono',monospace;letter-spacing:-0.3px;">ox:latest<i> </i><b style="color:#1a1c21">kubernetes.container_name</b><i> </i>count<i> </i><b style="color:#1a1c21">kubernetes.docker_id</b><i> </i>060e3eedc23fcf9659adf246386b94530de80229b8901&#8230;</div>
<div class="r" style="left:202.20px;top:391.42px;width:703.80px;height:43.42px;background:#f1f4fa"></div>
<div class="r" style="left:202.20px;top:434.04px;width:703.80px;height:0.80px;background:#e3e8f2"></div>
<div class="r" style="left:204.50px;top:394.52px;width:11.40px;height:11.00px;background:#fff;border:1.2px solid #c3c6cc;border-radius:3px;box-sizing:border-box"></div>
<svg class="r" style="left:221.50px;top:397.02px;" width="9" height="8" viewBox="0 0 9 8"><path d="M0.8 7.3L8 0.6M5.9 0.7l2.3-.1-.1 2.3M0.9 5.1l-.1 2.3 2.3-.1" fill="none" stroke="#7f8590" stroke-width="0.9"/></svg>
<div class="t" style="left:237.00px;top:396.00px;font-size:8.5px;line-height:11px;color:#464b55;font-family:'Liberation Mono',monospace;letter-spacing:-0.3px;">Apr 2, 2025 @ 10:51:54.730</div>
<div class="t" style="left:378.00px;top:396.00px;font-size:8.5px;line-height:11px;color:#4f545e;font-family:'Liberation Mono',monospace;letter-spacing:-0.3px;"><b style="color:#1a1c21">@timestamp</b><i> </i>Apr 2, 2025 @ 10:51:54.730<i> </i><b style="color:#1a1c21">_p</b><i> </i>F<i> </i><b style="color:#1a1c21">kubernetes.container_hash</b><i> </i>docker.io/library/busybox@sha256:37f7b3</div>
<div class="t" style="left:378.00px;top:409.00px;font-size:8.5px;line-height:11px;color:#4f545e;font-family:'Liberation Mono',monospace;letter-spacing:-0.3px;">78a29ceb4c551b1b5582e27747b855bbfaa73fa11914fe0df028dc581f<i> </i><b style="color:#1a1c21">kubernetes.container_image</b><i> </i>docker.io/library/busyb</div>
<div class="t" style="left:378.00px;top:423.00px;font-size:8.5px;line-height:11px;color:#4f545e;font-family:'Liberation Mono',monospace;letter-spacing:-0.3px;">ox:latest<i> </i><b style="color:#1a1c21">kubernetes.container_name</b><i> </i>count<i> </i><b style="color:#1a1c21">kubernetes.docker_id</b><i> </i>060e3eedc23fcf9659adf246386b94530de80229b8901&#8230;</div>
<div class="r" style="left:202.20px;top:434.84px;width:703.80px;height:43.42px;background:#fff"></div>
<div class="r" style="left:202.20px;top:477.46px;width:703.80px;height:0.80px;background:#e3e8f2"></div>
<div class="r" style="left:204.50px;top:437.94px;width:11.40px;height:11.00px;background:#fff;border:1.2px solid #c3c6cc;border-radius:3px;box-sizing:border-box"></div>
<svg class="r" style="left:221.50px;top:440.44px;" width="9" height="8" viewBox="0 0 9 8"><path d="M0.8 7.3L8 0.6M5.9 0.7l2.3-.1-.1 2.3M0.9 5.1l-.1 2.3 2.3-.1" fill="none" stroke="#7f8590" stroke-width="0.9"/></svg>
<div class="t" style="left:237.00px;top:440.00px;font-size:8.5px;line-height:11px;color:#464b55;font-family:'Liberation Mono',monospace;letter-spacing:-0.3px;">Apr 2, 2025 @ 10:51:52.727</div>
<div class="t" style="left:378.00px;top:440.00px;font-size:8.5px;line-height:11px;color:#4f545e;font-family:'Liberation Mono',monospace;letter-spacing:-0.3px;"><b style="color:#1a1c21">@timestamp</b><i> </i>Apr 2, 2025 @ 10:51:52.727<i> </i><b style="color:#1a1c21">_p</b><i> </i>F<i> </i><b style="color:#1a1c21">kubernetes.container_hash</b><i> </i>docker.io/library/busybox@sha256:37f7b3</div>
<div class="t" style="left:378.00px;top:453.00px;font-size:8.5px;line-height:11px;color:#4f545e;font-family:'Liberation Mono',monospace;letter-spacing:-0.3px;">78a29ceb4c551b1b5582e27747b855bbfaa73fa11914fe0df028dc581f<i> </i><b style="color:#1a1c21">kubernetes.container_image</b><i> </i>docker.io/library/busyb</div>
<div class="t" style="left:378.00px;top:466.00px;font-size:8.5px;line-height:11px;color:#4f545e;font-family:'Liberation Mono',monospace;letter-spacing:-0.3px;">ox:latest<i> </i><b style="color:#1a1c21">kubernetes.container_name</b><i> </i>count<i> </i><b style="color:#1a1c21">kubernetes.docker_id</b><i> </i>060e3eedc23fcf9659adf246386b94530de80229b8901&#8230;</div>
<div class="r" style="left:202.20px;top:478.26px;width:703.80px;height:43.42px;background:#f1f4fa"></div>
<div class="r" style="left:202.20px;top:520.88px;width:703.80px;height:0.80px;background:#e3e8f2"></div>
<div class="r" style="left:204.50px;top:481.36px;width:11.40px;height:11.00px;background:#fff;border:1.2px solid #c3c6cc;border-radius:3px;box-sizing:border-box"></div>
<svg class="r" style="left:221.50px;top:483.86px;" width="9" height="8" viewBox="0 0 9 8"><path d="M0.8 7.3L8 0.6M5.9 0.7l2.3-.1-.1 2.3M0.9 5.1l-.1 2.3 2.3-.1" fill="none" stroke="#7f8590" stroke-width="0.9"/></svg>
<div class="t" style="left:237.00px;top:483.00px;font-size:8.5px;line-height:11px;color:#464b55;font-family:'Liberation Mono',monospace;letter-spacing:-0.3px;">Apr 2, 2025 @ 10:51:50.723</div>
<div class="t" style="left:378.00px;top:483.00px;font-size:8.5px;line-height:11px;color:#4f545e;font-family:'Liberation Mono',monospace;letter-spacing:-0.3px;"><b style="color:#1a1c21">@timestamp</b><i> </i>Apr 2, 2025 @ 10:51:50.723<i> </i><b style="color:#1a1c21">_p</b><i> </i>F<i> </i><b style="color:#1a1c21">kubernetes.container_hash</b><i> </i>docker.io/library/busybox@sha256:37f7b3</div>
<div class="t" style="left:378.00px;top:496.00px;font-size:8.5px;line-height:11px;color:#4f545e;font-family:'Liberation Mono',monospace;letter-spacing:-0.3px;">78a29ceb4c551b1b5582e27747b855bbfaa73fa11914fe0df028dc581f<i> </i><b style="color:#1a1c21">kubernetes.container_image</b><i> </i>docker.io/library/busyb</div>
<div class="t" style="left:378.00px;top:509.00px;font-size:8.5px;line-height:11px;color:#4f545e;font-family:'Liberation Mono',monospace;letter-spacing:-0.3px;">ox:latest<i> </i><b style="color:#1a1c21">kubernetes.container_name</b><i> </i>count<i> </i><b style="color:#1a1c21">kubernetes.docker_id</b><i> </i>060e3eedc23fcf9659adf246386b94530de80229b8901&#8230;</div>
<div class="r" style="left:202.20px;top:521.68px;width:703.80px;height:43.42px;background:#fff"></div>
<div class="r" style="left:202.20px;top:564.30px;width:703.80px;height:0.80px;background:#e3e8f2"></div>
<div class="r" style="left:204.50px;top:524.78px;width:11.40px;height:11.00px;background:#fff;border:1.2px solid #c3c6cc;border-radius:3px;box-sizing:border-box"></div>
<svg class="r" style="left:221.50px;top:527.28px;" width="9" height="8" viewBox="0 0 9 8"><path d="M0.8 7.3L8 0.6M5.9 0.7l2.3-.1-.1 2.3M0.9 5.1l-.1 2.3 2.3-.1" fill="none" stroke="#7f8590" stroke-width="0.9"/></svg>
<div class="t" style="left:237.00px;top:526.00px;font-size:8.5px;line-height:11px;color:#464b55;font-family:'Liberation Mono',monospace;letter-spacing:-0.3px;">Apr 2, 2025 @ 10:51:48.718</div>
<div class="t" style="left:378.00px;top:526.00px;font-size:8.5px;line-height:11px;color:#4f545e;font-family:'Liberation Mono',monospace;letter-spacing:-0.3px;"><b style="color:#1a1c21">@timestamp</b><i> </i>Apr 2, 2025 @ 10:51:48.718<i> </i><b style="color:#1a1c21">_p</b><i> </i>F<i> </i><b style="color:#1a1c21">kubernetes.container_hash</b><i> </i>docker.io/library/busybox@sha256:37f7b3</div>
<div class="t" style="left:378.00px;top:540.00px;font-size:8.5px;line-height:11px;color:#4f545e;font-family:'Liberation Mono',monospace;letter-spacing:-0.3px;">78a29ceb4c551b1b5582e27747b855bbfaa73fa11914fe0df028dc581f<i> </i><b style="color:#1a1c21">kubernetes.container_image</b><i> </i>docker.io/library/busyb</div>
<div class="t" style="left:378.00px;top:553.00px;font-size:8.5px;line-height:11px;color:#4f545e;font-family:'Liberation Mono',monospace;letter-spacing:-0.3px;">ox:latest<i> </i><b style="color:#1a1c21">kubernetes.container_name</b><i> </i>count<i> </i><b style="color:#1a1c21">kubernetes.docker_id</b><i> </i>060e3eedc23fcf9659adf246386b94530de80229b8901&#8230;</div>
<div class="r" style="left:202.20px;top:565.10px;width:703.80px;height:43.42px;background:#f1f4fa"></div>
<div class="r" style="left:202.20px;top:607.72px;width:703.80px;height:0.80px;background:#e3e8f2"></div>
<div class="r" style="left:204.50px;top:568.20px;width:11.40px;height:11.00px;background:#fff;border:1.2px solid #c3c6cc;border-radius:3px;box-sizing:border-box"></div>
<svg class="r" style="left:221.50px;top:570.70px;" width="9" height="8" viewBox="0 0 9 8"><path d="M0.8 7.3L8 0.6M5.9 0.7l2.3-.1-.1 2.3M0.9 5.1l-.1 2.3 2.3-.1" fill="none" stroke="#7f8590" stroke-width="0.9"/></svg>
<div class="t" style="left:237.00px;top:570.00px;font-size:8.5px;line-height:11px;color:#464b55;font-family:'Liberation Mono',monospace;letter-spacing:-0.3px;">Apr 2, 2025 @ 10:51:46.714</div>
<div class="t" style="left:378.00px;top:570.00px;font-size:8.5px;line-height:11px;color:#4f545e;font-family:'Liberation Mono',monospace;letter-spacing:-0.3px;"><b style="color:#1a1c21">@timestamp</b><i> </i>Apr 2, 2025 @ 10:51:46.714<i> </i><b style="color:#1a1c21">_p</b><i> </i>F<i> </i><b style="color:#1a1c21">kubernetes.container_hash</b><i> </i>docker.io/library/busybox@sha256:37f7b3</div>
<div class="t" style="left:378.00px;top:583.00px;font-size:8.5px;line-height:11px;color:#4f545e;font-family:'Liberation Mono',monospace;letter-spacing:-0.3px;">78a29ceb4c551b1b5582e27747b855bbfaa73fa11914fe0df028dc581f<i> </i><b style="color:#1a1c21">kubernetes.container_image</b><i> </i>docker.io/library/busyb</div>
<div class="t" style="left:378.00px;top:596.00px;font-size:8.5px;line-height:11px;color:#4f545e;font-family:'Liberation Mono',monospace;letter-spacing:-0.3px;">ox:latest<i> </i><b style="color:#1a1c21">kubernetes.container_name</b><i> </i>count<i> </i><b style="color:#1a1c21">kubernetes.docker_id</b><i> </i>060e3eedc23fcf9659adf246386b94530de80229b8901&#8230;</div>
<div class="r" style="left:202.20px;top:608.52px;width:703.80px;height:43.42px;background:#fff"></div>
<div class="r" style="left:202.20px;top:651.14px;width:703.80px;height:0.80px;background:#e3e8f2"></div>
<div class="r" style="left:204.50px;top:611.62px;width:11.40px;height:11.00px;background:#fff;border:1.2px solid #c3c6cc;border-radius:3px;box-sizing:border-box"></div>
<svg class="r" style="left:221.50px;top:614.12px;" width="9" height="8" viewBox="0 0 9 8"><path d="M0.8 7.3L8 0.6M5.9 0.7l2.3-.1-.1 2.3M0.9 5.1l-.1 2.3 2.3-.1" fill="none" stroke="#7f8590" stroke-width="0.9"/></svg>
<div class="t" style="left:237.00px;top:613.00px;font-size:8.5px;line-height:11px;color:#464b55;font-family:'Liberation Mono',monospace;letter-spacing:-0.3px;">Apr 2, 2025 @ 10:51:44.711</div>
<div class="t" style="left:378.00px;top:613.00px;font-size:8.5px;line-height:11px;color:#4f545e;font-family:'Liberation Mono',monospace;letter-spacing:-0.3px;"><b style="color:#1a1c21">@timestamp</b><i> </i>Apr 2, 2025 @ 10:51:44.711<i> </i><b style="color:#1a1c21">_p</b><i> </i>F<i> </i><b style="color:#1a1c21">kubernetes.container_hash</b><i> </i>docker.io/library/busybox@sha256:37f7b3</div>
<div class="t" style="left:378.00px;top:627.00px;font-size:8.5px;line-height:11px;color:#4f545e;font-family:'Liberation Mono',monospace;letter-spacing:-0.3px;">78a29ceb4c551b1b5582e27747b855bbfaa73fa11914fe0df028dc581f<i> </i><b style="color:#1a1c21">kubernetes.container_image</b><i> </i>docker.io/library/busyb</div>
<div class="t" style="left:378.00px;top:640.00px;font-size:8.5px;line-height:11px;color:#4f545e;font-family:'Liberation Mono',monospace;letter-spacing:-0.3px;">ox:latest<i> </i><b style="color:#1a1c21">kubernetes.container_name</b><i> </i>count<i> </i><b style="color:#1a1c21">kubernetes.docker_id</b><i> </i>060e3eedc23fcf9659adf246386b94530de80229b8901&#8230;</div>
<div class="r" style="left:202.20px;top:651.94px;width:703.80px;height:43.42px;background:#f1f4fa"></div>
<div class="r" style="left:202.20px;top:694.56px;width:703.80px;height:0.80px;background:#e3e8f2"></div>
<div class="r" style="left:204.50px;top:655.04px;width:11.40px;height:11.00px;background:#fff;border:1.2px solid #c3c6cc;border-radius:3px;box-sizing:border-box"></div>
<svg class="r" style="left:221.50px;top:657.54px;" width="9" height="8" viewBox="0 0 9 8"><path d="M0.8 7.3L8 0.6M5.9 0.7l2.3-.1-.1 2.3M0.9 5.1l-.1 2.3 2.3-.1" fill="none" stroke="#7f8590" stroke-width="0.9"/></svg>
<div class="t" style="left:237.00px;top:657.00px;font-size:8.5px;line-height:11px;color:#464b55;font-family:'Liberation Mono',monospace;letter-spacing:-0.3px;">Apr 2, 2025 @ 10:51:42.708</div>
<div class="t" style="left:378.00px;top:657.00px;font-size:8.5px;line-height:11px;color:#4f545e;font-family:'Liberation Mono',monospace;letter-spacing:-0.3px;"><b style="color:#1a1c21">@timestamp</b><i> </i>Apr 2, 2025 @ 10:51:42.708<i> </i><b style="color:#1a1c21">_p</b><i> </i>F<i> </i><b style="color:#1a1c21">kubernetes.container_hash</b><i> </i>docker.io/library/busybox@sha256:37f7b3</div>
<div class="t" style="left:378.00px;top:670.00px;font-size:8.5px;line-height:11px;color:#4f545e;font-family:'Liberation Mono',monospace;letter-spacing:-0.3px;">78a29ceb4c551b1b5582e27747b855bbfaa73fa11914fe0df028dc581f<i> </i><b style="color:#1a1c21">kubernetes.container_image</b><i> </i>docker.io/library/busyb</div>
<div class="t" style="left:378.00px;top:683.00px;font-size:8.5px;line-height:11px;color:#4f545e;font-family:'Liberation Mono',monospace;letter-spacing:-0.3px;">ox:latest<i> </i><b style="color:#1a1c21">kubernetes.container_name</b><i> </i>count<i> </i><b style="color:#1a1c21">kubernetes.docker_id</b><i> </i>060e3eedc23fcf9659adf246386b94530de80229b8901&#8230;</div>
<div class="r" style="left:202.20px;top:695.36px;width:703.80px;height:43.42px;background:#fff"></div>
<div class="r" style="left:202.20px;top:737.98px;width:703.80px;height:0.80px;background:#e3e8f2"></div>
<div class="r" style="left:204.50px;top:698.46px;width:11.40px;height:11.00px;background:#fff;border:1.2px solid #c3c6cc;border-radius:3px;box-sizing:border-box"></div>
<svg class="r" style="left:221.50px;top:700.96px;" width="9" height="8" viewBox="0 0 9 8"><path d="M0.8 7.3L8 0.6M5.9 0.7l2.3-.1-.1 2.3M0.9 5.1l-.1 2.3 2.3-.1" fill="none" stroke="#7f8590" stroke-width="0.9"/></svg>
<div class="t" style="left:237.00px;top:700.00px;font-size:8.5px;line-height:11px;color:#464b55;font-family:'Liberation Mono',monospace;letter-spacing:-0.3px;">Apr 2, 2025 @ 10:51:40.705</div>
<div class="t" style="left:378.00px;top:700.00px;font-size:8.5px;line-height:11px;color:#4f545e;font-family:'Liberation Mono',monospace;letter-spacing:-0.3px;"><b style="color:#1a1c21">@timestamp</b><i> </i>Apr 2, 2025 @ 10:51:40.705<i> </i><b style="color:#1a1c21">_p</b><i> </i>F<i> </i><b style="color:#1a1c21">kubernetes.container_hash</b><i> </i>docker.io/library/busybox@sha256:37f7b3</div>
<div class="t" style="left:378.00px;top:713.00px;font-size:8.5px;line-height:11px;color:#4f545e;font-family:'Liberation Mono',monospace;letter-spacing:-0.3px;">78a29ceb4c551b1b5582e27747b855bbfaa73fa11914fe0df028dc581f<i> </i><b style="color:#1a1c21">kubernetes.container_image</b><i> </i>docker.io/library/busyb</div>
<div class="t" style="left:378.00px;top:727.00px;font-size:8.5px;line-height:11px;color:#4f545e;font-family:'Liberation Mono',monospace;letter-spacing:-0.3px;">ox:latest<i> </i><b style="color:#1a1c21">kubernetes.container_name</b><i> </i>count<i> </i><b style="color:#1a1c21">kubernetes.docker_id</b><i> </i>060e3eedc23fcf9659adf246386b94530de80229b8901&#8230;</div>
<div class="r" style="left:202.20px;top:738.78px;width:703.80px;height:43.42px;background:#f1f4fa"></div>
<div class="r" style="left:202.20px;top:781.40px;width:703.80px;height:0.80px;background:#e3e8f2"></div>
<div class="r" style="left:204.50px;top:741.88px;width:11.40px;height:11.00px;background:#fff;border:1.2px solid #c3c6cc;border-radius:3px;box-sizing:border-box"></div>
<svg class="r" style="left:221.50px;top:744.38px;" width="9" height="8" viewBox="0 0 9 8"><path d="M0.8 7.3L8 0.6M5.9 0.7l2.3-.1-.1 2.3M0.9 5.1l-.1 2.3 2.3-.1" fill="none" stroke="#7f8590" stroke-width="0.9"/></svg>
<div class="t" style="left:237.00px;top:744.00px;font-size:8.5px;line-height:11px;color:#464b55;font-family:'Liberation Mono',monospace;letter-spacing:-0.3px;">Apr 2, 2025 @ 10:51:38.701</div>
<div class="t" style="left:378.00px;top:744.00px;font-size:8.5px;line-height:11px;color:#4f545e;font-family:'Liberation Mono',monospace;letter-spacing:-0.3px;"><b style="color:#1a1c21">@timestamp</b><i> </i>Apr 2, 2025 @ 10:51:38.701<i> </i><b style="color:#1a1c21">_p</b><i> </i>F<i> </i><b style="color:#1a1c21">kubernetes.container_hash</b><i> </i>docker.io/library/busybox@sha256:37f7b3</div>
<div class="t" style="left:378.00px;top:757.00px;font-size:8.5px;line-height:11px;color:#4f545e;font-family:'Liberation Mono',monospace;letter-spacing:-0.3px;">78a29ceb4c551b1b5582e27747b855bbfaa73fa11914fe0df028dc581f<i> </i><b style="color:#1a1c21">kubernetes.container_image</b><i> </i>docker.io/library/busyb</div>
<div class="t" style="left:378.00px;top:770.00px;font-size:8.5px;line-height:11px;color:#4f545e;font-family:'Liberation Mono',monospace;letter-spacing:-0.3px;">ox:latest<i> </i><b style="color:#1a1c21">kubernetes.container_name</b><i> </i>count<i> </i><b style="color:#1a1c21">kubernetes.docker_id</b><i> </i>060e3eedc23fcf9659adf246386b94530de80229b8901&#8230;</div>
<div class="r" style="left:202.20px;top:782.20px;width:703.80px;height:43.42px;background:#fff"></div>
<div class="r" style="left:202.20px;top:824.82px;width:703.80px;height:0.80px;background:#e3e8f2"></div>
<div class="r" style="left:204.50px;top:785.30px;width:11.40px;height:11.00px;background:#fff;border:1.2px solid #c3c6cc;border-radius:3px;box-sizing:border-box"></div>
<svg class="r" style="left:221.50px;top:787.80px;" width="9" height="8" viewBox="0 0 9 8"><path d="M0.8 7.3L8 0.6M5.9 0.7l2.3-.1-.1 2.3M0.9 5.1l-.1 2.3 2.3-.1" fill="none" stroke="#7f8590" stroke-width="0.9"/></svg>
<div class="t" style="left:237.00px;top:787.00px;font-size:8.5px;line-height:11px;color:#464b55;font-family:'Liberation Mono',monospace;letter-spacing:-0.3px;">Apr 2, 2025 @ 10:51:36.698</div>
<div class="t" style="left:378.00px;top:787.00px;font-size:8.5px;line-height:11px;color:#4f545e;font-family:'Liberation Mono',monospace;letter-spacing:-0.3px;"><b style="color:#1a1c21">@timestamp</b><i> </i>Apr 2, 2025 @ 10:51:36.698<i> </i><b style="color:#1a1c21">_p</b><i> </i>F<i> </i><b style="color:#1a1c21">kubernetes.container_hash</b><i> </i>docker.io/library/busybox@sha256:37f7b3</div>
<div class="t" style="left:378.00px;top:800.00px;font-size:8.5px;line-height:11px;color:#4f545e;font-family:'Liberation Mono',monospace;letter-spacing:-0.3px;">78a29ceb4c551b1b5582e27747b855bbfaa73fa11914fe0df028dc581f<i> </i><b style="color:#1a1c21">kubernetes.container_image</b><i> </i>docker.io/library/busyb</div>
<div class="t" style="left:378.00px;top:813.00px;font-size:8.5px;line-height:11px;color:#4f545e;font-family:'Liberation Mono',monospace;letter-spacing:-0.3px;">ox:latest<i> </i><b style="color:#1a1c21">kubernetes.container_name</b><i> </i>count<i> </i><b style="color:#1a1c21">kubernetes.docker_id</b><i> </i>060e3eedc23fcf9659adf246386b94530de80229b8901&#8230;</div>
<div class="r" style="left:202.20px;top:825.62px;width:703.80px;height:43.42px;background:#f1f4fa"></div>
<div class="r" style="left:202.20px;top:868.24px;width:703.80px;height:0.80px;background:#e3e8f2"></div>
<div class="r" style="left:204.50px;top:828.72px;width:11.40px;height:11.00px;background:#fff;border:1.2px solid #c3c6cc;border-radius:3px;box-sizing:border-box"></div>
<svg class="r" style="left:221.50px;top:831.22px;" width="9" height="8" viewBox="0 0 9 8"><path d="M0.8 7.3L8 0.6M5.9 0.7l2.3-.1-.1 2.3M0.9 5.1l-.1 2.3 2.3-.1" fill="none" stroke="#7f8590" stroke-width="0.9"/></svg>
<div class="t" style="left:237.00px;top:830.00px;font-size:8.5px;line-height:11px;color:#464b55;font-family:'Liberation Mono',monospace;letter-spacing:-0.3px;">Apr 2, 2025 @ 10:51:34.694</div>
<div class="t" style="left:378.00px;top:830.00px;font-size:8.5px;line-height:11px;color:#4f545e;font-family:'Liberation Mono',monospace;letter-spacing:-0.3px;"><b style="color:#1a1c21">@timestamp</b><i> </i>Apr 2, 2025 @ 10:51:34.694<i> </i><b style="color:#1a1c21">_p</b><i> </i>F<i> </i><b style="color:#1a1c21">kubernetes.container_hash</b><i> </i>docker.io/library/busybox@sha256:37f7b3</div>
<div class="t" style="left:378.00px;top:844.00px;font-size:8.5px;line-height:11px;color:#4f545e;font-family:'Liberation Mono',monospace;letter-spacing:-0.3px;">78a29ceb4c551b1b5582e27747b855bbfaa73fa11914fe0df028dc581f<i> </i><b style="color:#1a1c21">kubernetes.container_image</b><i> </i>docker.io/library/busyb</div>
<div class="t" style="left:378.00px;top:857.00px;font-size:8.5px;line-height:11px;color:#4f545e;font-family:'Liberation Mono',monospace;letter-spacing:-0.3px;">ox:latest<i> </i><b style="color:#1a1c21">kubernetes.container_name</b><i> </i>count<i> </i><b style="color:#1a1c21">kubernetes.docker_id</b><i> </i>060e3eedc23fcf9659adf246386b94530de80229b8901&#8230;</div>
<div class="r" style="left:906.00px;top:64.00px;width:2.00px;height:805.00px;background:#d3dae6"></div>
<div class="r" style="left:908.00px;top:64.00px;width:796.00px;height:805.00px;background:#fff"></div>
<div class="r" style="left:908.00px;top:64.00px;width:796.00px;height:7.00px;background:linear-gradient(#eae9e7,#f5f5f5 45%,#fdfdfd)"></div>
<div class="t" style="left:918.70px;top:75.00px;font-size:10.6px;line-height:14px;color:#1a1c21;font-weight:700;">Result</div>
<svg class="r" style="left:965.50px;top:77.00px;" width="10" height="10" viewBox="0 0 10 10"><path d="M1.5 1v8M7.5 1L4 5l3.5 4" fill="none" stroke="#a9b7cf" stroke-width="0.9"/></svg>
<svg class="r" style="left:982.00px;top:77.00px;" width="8" height="10" viewBox="0 0 8 10"><path d="M6 1L2.5 5L6 9" fill="none" stroke="#a9b7cf" stroke-width="0.9"/></svg>
<div class="t" style="left:999.20px;top:77.00px;font-size:9.6px;line-height:12px;color:#0061a6;font-weight:700;">1</div>
<div class="t" style="left:1009.30px;top:77.00px;font-size:9.6px;line-height:12px;color:#69707d;">of</div>
<div class="t" style="left:1023.40px;top:77.00px;font-size:9.6px;line-height:12px;color:#1a1c21;text-shadow:0.3px 0 0 #1a1c21;">223</div>
<svg class="r" style="left:1050.00px;top:77.00px;" width="8" height="10" viewBox="0 0 8 10"><path d="M2 1L5.5 5L2 9" fill="none" stroke="#343741" stroke-width="0.9"/></svg>
<svg class="r" style="left:1065.00px;top:77.00px;" width="10" height="10" viewBox="0 0 10 10"><path d="M8.5 1v8M2 1l3.5 4L2 9" fill="none" stroke="#343741" stroke-width="0.9"/></svg>
<svg class="r" style="left:1688.00px;top:72.00px;" width="10" height="10" viewBox="0 0 10 10"><path d="M1.5 1.5l7 7M8.5 1.5l-7 7" stroke="#343741" stroke-width="0.9"/></svg>
<div class="r" style="left:908.00px;top:100.50px;width:796.00px;height:1.00px;background:#e3e8f2"></div>
<div class="t" style="left:921.60px;top:118.00px;font-size:8.1px;line-height:11px;color:#0061a6;font-weight:700;">Table</div>
<div class="t" style="left:955.90px;top:118.00px;font-size:8.1px;line-height:11px;color:#1a1c21;font-weight:700;">JSON</div>
<div class="r" style="left:918.50px;top:133.00px;width:777.20px;height:1.00px;background:#e3e8f2"></div>
<div class="r" style="left:918.50px;top:131.50px;width:26.50px;height:2.00px;background:#0077cc;opacity:0.75"></div>
<div class="r" style="left:918.50px;top:139.30px;width:777.20px;height:19.90px;background:#fbfcfd;border:1px solid #e6ebf2;border-radius:4px;box-sizing:border-box"></div>
<div class="r" style="left:1658.00px;top:139.30px;width:37.70px;height:19.90px;background:#e9edf3;border-radius:0 4px 4px 0"></div>
<svg class="r" style="left:922.50px;top:144.00px;" width="10" height="10" viewBox="0 0 10 10"><circle cx="4.3" cy="4.3" r="3.2" fill="none" stroke="#69707d" stroke-width="0.9"/><path d="M6.6 6.6L9 9" stroke="#69707d" stroke-width="0.9"/></svg>
<div class="t" style="left:936.40px;top:144.00px;font-size:10.0px;line-height:13px;color:#7d8491;">Search field names or values</div>
<svg class="r" style="left:1663.50px;top:146.00px;" width="10" height="8" viewBox="0 0 10 8"><path d="M1 1.2h8M2.5 3.6h5M4 6h2" stroke="#6a9ed6" stroke-width="0.9"/></svg>
<div class="r" style="left:1678.00px;top:143.50px;width:13.00px;height:11.50px;background:#dfe5ef;border-radius:3px"></div>
<div class="t" style="left:1682.00px;top:145.00px;font-size:8.5px;line-height:11px;color:#343741;font-weight:700;">0</div>
<div class="r" style="left:1512.90px;top:165.70px;width:18.20px;height:10.20px;background:#e3e8f2;border-radius:6px"></div>
<div class="r" style="left:1512.90px;top:165.70px;width:10.20px;height:10.20px;background:#fff;border:1px solid #98a2b3;border-radius:50%;box-sizing:border-box"></div>
<div class="t" style="left:1536.50px;top:165.00px;font-size:10.0px;line-height:13px;color:#a2abba;">Selected only</div>
<div class="r" style="left:1607.70px;top:165.70px;width:18.20px;height:10.20px;background:#0b64dd;border-radius:6px"></div>
<div class="r" style="left:1615.70px;top:165.70px;width:10.20px;height:10.20px;background:#fff;border:1px solid #0b64dd;border-radius:50%;box-sizing:border-box"></div>
<div class="t" style="left:1631.70px;top:165.00px;font-size:10.0px;line-height:13px;color:#343741;">Hide null fields</div>
<div class="t" style="left:943.80px;top:186.00px;font-size:8.1px;line-height:11px;color:#1a1c21;font-weight:700;">Field</div>
<div class="t" style="left:1177.30px;top:186.00px;font-size:8.1px;line-height:11px;color:#1a1c21;font-weight:700;">Value</div>
<div class="r" style="left:918.50px;top:199.80px;width:777.20px;height:1.00px;background:#d9e0ea"></div>
<div class="r" style="left:918.50px;top:200.50px;width:777.20px;height:20.07px;background:#fff"></div>
<div class="r" style="left:918.50px;top:220.27px;width:777.20px;height:1.00px;background:#e3e8f2"></div>
<div class="r" style="left:943.60px;top:204.70px;width:10.60px;height:10.60px;background:#e9f1fa;border:0.8px solid #d3e3f4;border-radius:2.5px;box-sizing:border-box"></div>
<div class="t" style="left:947.00px;top:206.00px;font-size:7.6px;line-height:10px;color:#1e4d8c;font-weight:700;font-style:italic;font-family:'Liberation Serif',serif;">t</div>
<div class="t" style="left:959.80px;top:205.00px;font-size:8.5px;line-height:11px;color:#4b505b;">_p</div>
<div class="t" style="left:1177.30px;top:205.00px;font-size:9.0px;line-height:12px;color:#343741;">F</div>
<div class="r" style="left:918.50px;top:220.57px;width:777.20px;height:20.07px;background:#f1f4fa"></div>
<div class="r" style="left:918.50px;top:240.34px;width:777.20px;height:1.00px;background:#e3e8f2"></div>
<div class="r" style="left:943.60px;top:224.77px;width:10.60px;height:10.60px;background:#f6f1e6;border:0.8px solid #ebe3d2;border-radius:2.5px;box-sizing:border-box"></div>
<svg class="r" style="left:945.70px;top:226.47px;" width="6.4" height="7" viewBox="0 0 6.4 7"><rect x="0.5" y="0.8" width="5.4" height="5.6" rx="0.6" fill="#ddd6ca" stroke="#9b958b" stroke-width="0.8"/><path d="M0.5 2.4h5.4M0.5 4.2h5.4" stroke="#b3ada3" stroke-width="0.5"/></svg>
<div class="t" style="left:959.80px;top:225.00px;font-size:8.5px;line-height:11px;color:#4b505b;">@timestamp</div>
<div class="t" style="left:1177.30px;top:225.00px;font-size:9.0px;line-height:12px;color:#343741;">Apr 2, 2025 @ 10:51:56.739</div>
<div class="r" style="left:918.50px;top:240.64px;width:777.20px;height:20.07px;background:#fff"></div>
<div class="r" style="left:918.50px;top:260.41px;width:777.20px;height:1.00px;background:#e3e8f2"></div>
<div class="r" style="left:943.60px;top:244.84px;width:10.60px;height:10.60px;background:#e9f1fa;border:0.8px solid #d3e3f4;border-radius:2.5px;box-sizing:border-box"></div>
<div class="t" style="left:947.00px;top:246.00px;font-size:7.6px;line-height:10px;color:#1e4d8c;font-weight:700;font-style:italic;font-family:'Liberation Serif',serif;">t</div>
<div class="t" style="left:959.80px;top:245.00px;font-size:8.5px;line-height:11px;color:#4b505b;">kubernetes.container_hash</div>
<div class="t" style="left:1177.30px;top:245.00px;font-size:9.0px;line-height:12px;color:#343741;">docker.io/library/busybox@sha256:37f7b378a29ceb4c551b1b5582e27747b855bbfaa73fa11914fe0df028dc581f</div>
<div class="r" style="left:918.50px;top:260.71px;width:777.20px;height:20.07px;background:#f1f4fa"></div>
<div class="r" style="left:918.50px;top:280.48px;width:777.20px;height:1.00px;background:#e3e8f2"></div>
<div class="r" style="left:943.60px;top:264.91px;width:10.60px;height:10.60px;background:#e9f1fa;border:0.8px solid #d3e3f4;border-radius:2.5px;box-sizing:border-box"></div>
<div class="t" style="left:947.00px;top:266.00px;font-size:7.6px;line-height:10px;color:#1e4d8c;font-weight:700;font-style:italic;font-family:'Liberation Serif',serif;">t</div>
<div class="t" style="left:959.80px;top:265.00px;font-size:8.5px;line-height:11px;color:#4b505b;">kubernetes.container_image</div>
<div class="t" style="left:1177.30px;top:266.00px;font-size:9.0px;line-height:12px;color:#343741;">docker.io/library/busybox:latest</div>
<div class="r" style="left:918.50px;top:280.78px;width:777.20px;height:20.07px;background:#fff"></div>
<div class="r" style="left:918.50px;top:300.55px;width:777.20px;height:1.00px;background:#e3e8f2"></div>
<div class="r" style="left:943.60px;top:284.98px;width:10.60px;height:10.60px;background:#e9f1fa;border:0.8px solid #d3e3f4;border-radius:2.5px;box-sizing:border-box"></div>
<div class="t" style="left:947.00px;top:286.00px;font-size:7.6px;line-height:10px;color:#1e4d8c;font-weight:700;font-style:italic;font-family:'Liberation Serif',serif;">t</div>
<div class="t" style="left:959.80px;top:285.00px;font-size:8.5px;line-height:11px;color:#4b505b;">kubernetes.container_name</div>
<div class="t" style="left:1177.30px;top:286.00px;font-size:9.0px;line-height:12px;color:#343741;">count</div>
<div class="r" style="left:918.50px;top:300.85px;width:777.20px;height:20.07px;background:#f1f4fa"></div>
<div class="r" style="left:918.50px;top:320.62px;width:777.20px;height:1.00px;background:#e3e8f2"></div>
<div class="r" style="left:943.60px;top:305.05px;width:10.60px;height:10.60px;background:#e9f1fa;border:0.8px solid #d3e3f4;border-radius:2.5px;box-sizing:border-box"></div>
<div class="t" style="left:947.00px;top:306.00px;font-size:7.6px;line-height:10px;color:#1e4d8c;font-weight:700;font-style:italic;font-family:'Liberation Serif',serif;">t</div>
<div class="t" style="left:959.80px;top:305.00px;font-size:8.5px;line-height:11px;color:#4b505b;">kubernetes.docker_id</div>
<div class="t" style="left:1177.30px;top:306.00px;font-size:9.0px;line-height:12px;color:#343741;">060e3eedc23fcf9659adf246386b94530de80229b8901de9daa12b7bf503beb4</div>
<div class="r" style="left:918.50px;top:320.92px;width:777.20px;height:20.07px;background:#fff"></div>
<div class="r" style="left:918.50px;top:340.69px;width:777.20px;height:1.00px;background:#e3e8f2"></div>
<div class="r" style="left:943.60px;top:325.12px;width:10.60px;height:10.60px;background:#e9f1fa;border:0.8px solid #d3e3f4;border-radius:2.5px;box-sizing:border-box"></div>
<div class="t" style="left:947.00px;top:326.00px;font-size:7.6px;line-height:10px;color:#1e4d8c;font-weight:700;font-style:italic;font-family:'Liberation Serif',serif;">t</div>
<div class="t" style="left:959.80px;top:325.00px;font-size:8.5px;line-height:11px;color:#4b505b;">kubernetes.host</div>
<div class="t" style="left:1177.30px;top:326.00px;font-size:9.0px;line-height:12px;color:#343741;">aks-pkl02pool-19059035-vmss000000</div>
<div class="r" style="left:918.50px;top:340.99px;width:777.20px;height:20.07px;background:#f1f4fa"></div>
<div class="r" style="left:918.50px;top:360.76px;width:777.20px;height:1.00px;background:#e3e8f2"></div>
<div class="r" style="left:943.60px;top:345.19px;width:10.60px;height:10.60px;background:#e9f1fa;border:0.8px solid #d3e3f4;border-radius:2.5px;box-sizing:border-box"></div>
<div class="t" style="left:947.00px;top:346.00px;font-size:7.6px;line-height:10px;color:#1e4d8c;font-weight:700;font-style:italic;font-family:'Liberation Serif',serif;">t</div>
<div class="t" style="left:959.80px;top:345.00px;font-size:8.5px;line-height:11px;color:#4b505b;">kubernetes.labels.run</div>
<div class="t" style="left:1177.30px;top:346.00px;font-size:9.0px;line-height:12px;color:#343741;">count</div>
<div class="r" style="left:918.50px;top:361.06px;width:777.20px;height:20.07px;background:#fff"></div>
<div class="r" style="left:918.50px;top:380.83px;width:777.20px;height:1.00px;background:#e3e8f2"></div>
<div class="r" style="left:943.60px;top:365.26px;width:10.60px;height:10.60px;background:#e9f1fa;border:0.8px solid #d3e3f4;border-radius:2.5px;box-sizing:border-box"></div>
<div class="t" style="left:947.00px;top:367.00px;font-size:7.6px;line-height:10px;color:#1e4d8c;font-weight:700;font-style:italic;font-family:'Liberation Serif',serif;">t</div>
<div class="t" style="left:959.80px;top:366.00px;font-size:8.5px;line-height:11px;color:#4b505b;">kubernetes.namespace_name</div>
<div class="t" style="left:1177.30px;top:366.00px;font-size:9.0px;line-height:12px;color:#343741;">pkl02-vm-0-ns</div>
<div class="r" style="left:918.50px;top:381.13px;width:777.20px;height:20.07px;background:#f1f4fa"></div>
<div class="r" style="left:918.50px;top:400.90px;width:777.20px;height:1.00px;background:#e3e8f2"></div>
<div class="r" style="left:943.60px;top:385.33px;width:10.60px;height:10.60px;background:#e9f1fa;border:0.8px solid #d3e3f4;border-radius:2.5px;box-sizing:border-box"></div>
<div class="t" style="left:947.00px;top:387.00px;font-size:7.6px;line-height:10px;color:#1e4d8c;font-weight:700;font-style:italic;font-family:'Liberation Serif',serif;">t</div>
<div class="t" style="left:959.80px;top:386.00px;font-size:8.5px;line-height:11px;color:#4b505b;">kubernetes.pod_id</div>
<div class="t" style="left:1177.30px;top:386.00px;font-size:9.0px;line-height:12px;color:#343741;">2f13d644-55b6-42ce-8110-515e85c4ebfa</div>
<div class="r" style="left:918.50px;top:401.20px;width:777.20px;height:20.07px;background:#fff"></div>
<div class="r" style="left:918.50px;top:420.97px;width:777.20px;height:1.00px;background:#e3e8f2"></div>
<div class="r" style="left:943.60px;top:405.40px;width:10.60px;height:10.60px;background:#e9f1fa;border:0.8px solid #d3e3f4;border-radius:2.5px;box-sizing:border-box"></div>
<div class="t" style="left:947.00px;top:407.00px;font-size:7.6px;line-height:10px;color:#1e4d8c;font-weight:700;font-style:italic;font-family:'Liberation Serif',serif;">t</div>
<div class="t" style="left:959.80px;top:406.00px;font-size:8.5px;line-height:11px;color:#4b505b;">kubernetes.pod_ip</div>
<div class="t" style="left:1177.30px;top:406.00px;font-size:9.0px;line-height:12px;color:#343741;">10.244.0.42</div>
<div class="r" style="left:918.50px;top:421.27px;width:777.20px;height:20.07px;background:#f1f4fa"></div>
<div class="r" style="left:918.50px;top:441.04px;width:777.20px;height:1.00px;background:#e3e8f2"></div>
<div class="r" style="left:943.60px;top:425.47px;width:10.60px;height:10.60px;background:#e9f1fa;border:0.8px solid #d3e3f4;border-radius:2.5px;box-sizing:border-box"></div>
<div class="t" style="left:947.00px;top:427.00px;font-size:7.6px;line-height:10px;color:#1e4d8c;font-weight:700;font-style:italic;font-family:'Liberation Serif',serif;">t</div>
<div class="t" style="left:959.80px;top:426.00px;font-size:8.5px;line-height:11px;color:#4b505b;">kubernetes.pod_name</div>
<div class="t" style="left:1177.30px;top:426.00px;font-size:9.0px;line-height:12px;color:#343741;">count</div>
<div class="r" style="left:918.50px;top:441.34px;width:777.20px;height:20.07px;background:#fff"></div>
<div class="r" style="left:918.50px;top:461.11px;width:777.20px;height:1.00px;background:#e3e8f2"></div>
<div class="r" style="left:943.60px;top:445.54px;width:10.60px;height:10.60px;background:#e9f1fa;border:0.8px solid #d3e3f4;border-radius:2.5px;box-sizing:border-box"></div>
<div class="t" style="left:947.00px;top:447.00px;font-size:7.6px;line-height:10px;color:#1e4d8c;font-weight:700;font-style:italic;font-family:'Liberation Serif',serif;">t</div>
<div class="t" style="left:959.80px;top:446.00px;font-size:8.5px;line-height:11px;color:#4b505b;">log</div>
<div class="t" style="left:1177.30px;top:446.00px;font-size:9.0px;line-height:12px;color:#343741;">222: Wed Apr  2 08:51:56 UTC 2025</div>
<div class="r" style="left:918.50px;top:461.41px;width:777.20px;height:20.07px;background:#f1f4fa"></div>
<div class="r" style="left:918.50px;top:481.18px;width:777.20px;height:1.00px;background:#e3e8f2"></div>
<div class="r" style="left:943.60px;top:465.61px;width:10.60px;height:10.60px;background:#e9f1fa;border:0.8px solid #d3e3f4;border-radius:2.5px;box-sizing:border-box"></div>
<div class="t" style="left:947.00px;top:467.00px;font-size:7.6px;line-height:10px;color:#1e4d8c;font-weight:700;font-style:italic;font-family:'Liberation Serif',serif;">t</div>
<div class="t" style="left:959.80px;top:466.00px;font-size:8.5px;line-height:11px;color:#4b505b;">stream</div>
<div class="t" style="left:1177.30px;top:466.00px;font-size:9.0px;line-height:12px;color:#343741;">stdout</div>
<div class="r" style="left:918.50px;top:481.48px;width:777.20px;height:20.07px;background:#fff"></div>
<div class="r" style="left:918.50px;top:501.25px;width:777.20px;height:1.00px;background:#e3e8f2"></div>
<div class="r" style="left:943.60px;top:485.68px;width:10.60px;height:10.60px;background:#f6f1e6;border:0.8px solid #ebe3d2;border-radius:2.5px;box-sizing:border-box"></div>
<svg class="r" style="left:945.70px;top:487.38px;" width="6.4" height="7" viewBox="0 0 6.4 7"><rect x="0.5" y="0.8" width="5.4" height="5.6" rx="0.6" fill="#ddd6ca" stroke="#9b958b" stroke-width="0.8"/><path d="M0.5 2.4h5.4M0.5 4.2h5.4" stroke="#b3ada3" stroke-width="0.5"/></svg>
<div class="t" style="left:959.80px;top:486.00px;font-size:8.5px;line-height:11px;color:#4b505b;">time</div>
<div class="t" style="left:1177.30px;top:486.00px;font-size:9.0px;line-height:12px;color:#343741;">Apr 2, 2025 @ 10:51:56.739</div>
<div class="r" style="left:918.50px;top:501.00px;width:777.20px;height:1.00px;background:#d9e0ea"></div>
<div class="r" style="left:918.50px;top:502.00px;width:777.20px;height:313.00px;background:#f7f8fc"></div>
<div class="r" style="left:918.50px;top:813.80px;width:777.20px;height:1.20px;background:#eff1f6"></div>
<div class="r" style="left:908.00px;top:824.80px;width:796.00px;height:1.20px;background:#e9edf5"></div>
<div class="r" style="left:908.00px;top:825.50px;width:796.00px;height:43.50px;background:#eff2f9"></div>
<svg class="r" style="left:919.50px;top:843.00px;" width="9" height="9" viewBox="0 0 9 9"><path d="M1 1l7 7M8 1L1 8" stroke="#0061a6" stroke-width="0.9"/></svg>
<div class="t" style="left:935.00px;top:842.00px;font-size:9.0px;line-height:12px;color:#0061a6;font-weight:700;">Close</div>
<div class="r" style="left:955.90px;top:65.70px;width:128.70px;height:32.60px;border:3px solid #ff1e00;border-radius:17px;box-sizing:border-box"></div>
<div class="t" style="left:1101.20px;top:68.00px;font-size:20.0px;line-height:26px;color:#ff1e00;font-weight:700;font-style:italic;transform:scaleX(1.205);transform-origin:0 0;">Navigate result details</div>
<div class="r" style="left:1600.00px;top:156.80px;width:103.50px;height:28.10px;border:3px solid #ff1e00;border-radius:14px;box-sizing:border-box"></div>
<div class="t" style="left:1569.20px;top:185.00px;font-size:20.0px;line-height:26px;color:#ff1e00;font-weight:700;font-style:italic;transform:scaleX(1.19);transform-origin:0 0;">Then here</div>
<div class="r" style="left:218.10px;top:347.90px;width:15.90px;height:42.80px;border:1.5px solid #5a6580;border-radius:3px;box-sizing:border-box"></div>
<svg class="r" style="left:220.80px;top:352.40px;" width="10" height="10" viewBox="0 0 10 10"><path d="M1 8.9L3.6 6.3M5.9 4L8.5 1.4" stroke="#6d9fd6" stroke-width="1"/><path d="M4.4 5.5l-2.3 0.1 2.2 2.1zM5.1 4.8l0.1-2.3 2.1 2.2z" fill="#5f93cf"/></svg>
<div class="r" style="left:212.10px;top:340.20px;width:28.30px;height:59.60px;border:3px solid #ff1e00;border-radius:14px;box-sizing:border-box"></div>
<div class="t" style="left:247.30px;top:367.00px;font-size:20.0px;line-height:26px;color:#ff1e00;font-weight:700;font-style:italic;transform:scaleX(1.15);transform-origin:0 0;">Click here</div>
<div class="r" style="left:761.80px;top:442.40px;width:199.40px;height:3.20px;background:#f7e400"></div>
<svg class="r" style="left:0.00px;top:863.00px;" width="6" height="6" viewBox="0 0 6 6"><path d="M0 0 A6 6 0 0 0 6 6 H0z" fill="#000"/></svg>
<svg class="r" style="left:1701.00px;top:866.00px;" width="3" height="3" viewBox="0 0 3 3"><path d="M3 0 A3 3 0 0 1 0 3 H3z" fill="#000"/></svg>
</body></html>
